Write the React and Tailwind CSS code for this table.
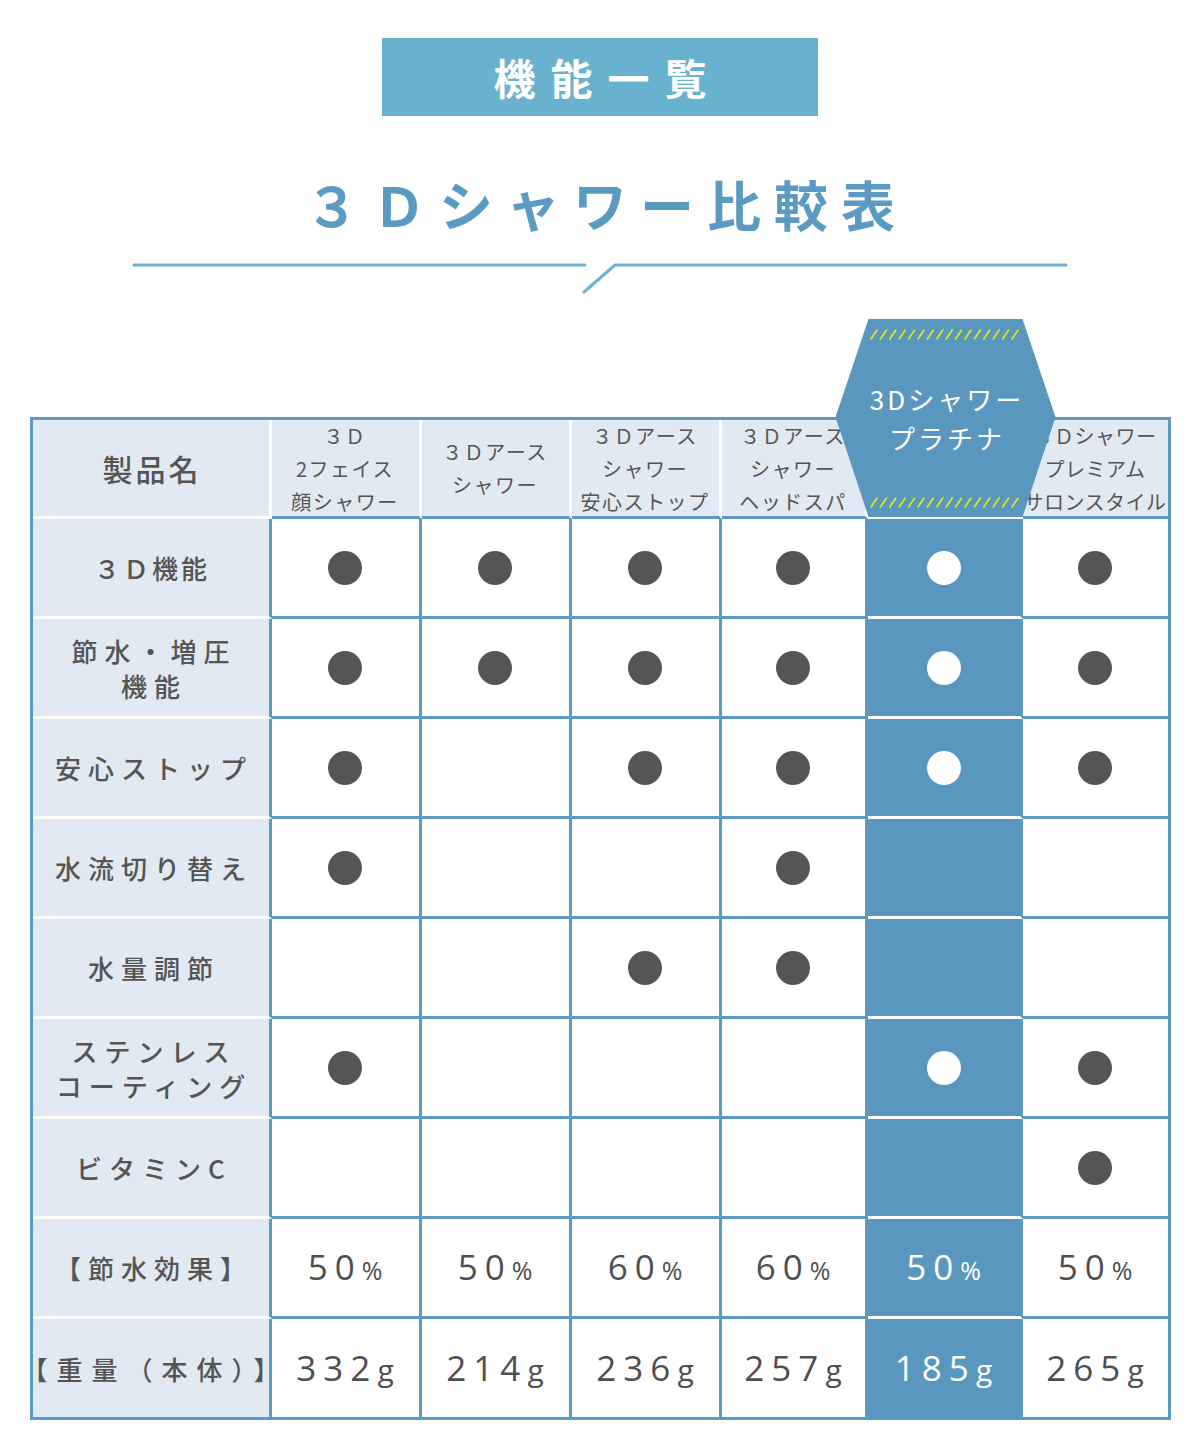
import React from "react";

const headers = [
  ["３Ｄ", "2フェイス", "顔シャワー"],
  ["３Ｄアース", "シャワー"],
  ["３Ｄアース", "シャワー", "安心ストップ"],
  ["３Ｄアース", "シャワー", "ヘッドスパ"],
  null, // platinum (covered by hexagon)
  ["３Ｄシャワー", "プレミアム", "サロンスタイル"],
];

// 1 = dot, 0 = empty
const featureRows = [
  { label: ["３Ｄ機能"], vals: [1, 1, 1, 1, 1, 1], tight: true },
  { label: ["節水・増圧", "機能"], vals: [1, 1, 1, 1, 1, 1] },
  { label: ["安心ストップ"], vals: [1, 0, 1, 1, 1, 1] },
  { label: ["水流切り替え"], vals: [1, 0, 0, 1, 0, 0] },
  { label: ["水量調節"], vals: [0, 0, 1, 1, 0, 0] },
  { label: ["ステンレス", "コーティング"], vals: [1, 0, 0, 0, 1, 1] },
  { label: ["ビタミンC"], vals: [0, 0, 0, 0, 0, 1] },
];

const saving = ["50", "50", "60", "60", "50", "50"];
const weight = ["332", "214", "236", "257", "185", "265"];

const PLAT = 4;

const Stripes = ({ y }) => (
  <g stroke="#e9e61c" strokeWidth="1.6" strokeLinecap="round">
    {Array.from({ length: 16 }).map((_, i) => {
      const x = 35 + i * 9.4;
      return <line key={i} x1={x} y1={y + 9} x2={x + 6} y2={y} />;
    })}
  </g>
);

const Hexagon = () => (
  <div className="absolute top-0 left-[806px] w-[220px] h-[198px] bg-[#5a97be] [clip-path:polygon(33px_0,187px_0,220px_98px,187px_198px,33px_198px,0_98px)] flex flex-col items-center justify-center text-white text-[26px] leading-[39px] tracking-[3px]">
    <svg className="absolute inset-0" width="220" height="198" viewBox="0 0 220 198">
      <Stripes y={11} />
      <Stripes y={179} />
    </svg>
    <p className="relative pl-[3px]">3Dシャワー</p>
    <p className="relative pl-[3px]">プラチナ</p>
  </div>
);

const cellClass = (col, last) => {
  const isLastCol = col === 5;
  if (col === PLAT) {
    return last
      ? "bg-[#5a97be] border-r-[3px] border-r-[#5b9bc1] h-[98px]"
      : "bg-[#5a97be] border-r-[3px] border-r-[#5b9bc1] border-b-[3px] border-b-white h-[100px]";
  }
  if (isLastCol) {
    return last
      ? "bg-white h-[98px]"
      : "bg-white border-b-[3px] border-b-[#5b9bc1] h-[100px]";
  }
  return last
    ? "bg-white border-r-[3px] border-r-[#5b9bc1] h-[98px]"
    : "bg-white border-r-[3px] border-r-[#5b9bc1] border-b-[3px] border-b-[#5b9bc1] h-[100px]";
};

const Label = ({ lines, last, tight, wide }) => (
  <div
    className={
      "flex flex-col items-center justify-center bg-[#e1e9f2] border-r-[3px] border-r-[#5b9bc1] text-[#555] font-medium text-[26px] leading-[35px] whitespace-nowrap " +
      (last ? "h-[98px] " : "h-[100px] border-b-[3px] border-b-white ") +
      (tight ? "tracking-[3px] pl-[3px]" : wide ? "tracking-[9px] pl-[9px]" : "tracking-[7px] pl-[7px]")
    }
  >
    {lines.map((l) => (
      <p key={l}>{l}</p>
    ))}
  </div>
);

const Num = ({ value, unit, plat }) => (
  <p
    className={
      "font-['Open_Sans','Noto_Sans_CJK_JP',sans-serif] " +
      (plat ? "text-white" : "text-[#4f4f4f]")
    }
  >
    <span className="text-[35px] tracking-[7px]">{value}</span>
    <span className={unit === "%" ? "text-[25px]" : "text-[30px]"}>{unit}</span>
  </p>
);

export default function App() {
  return (
    <div className="w-[1200px] min-h-[1450px] bg-white flex flex-col items-center font-['Noto_Sans_CJK_JP',sans-serif]">
      {/* Badge */}
      <div className="mt-[38px] w-[436px] h-[78px] bg-[#69b2cf] flex items-center justify-center">
        <span className="text-white font-bold text-[42px] tracking-[15px] pl-[15px] leading-none">
          機能一覧
        </span>
      </div>

      {/* Title */}
      <h1 className="mt-[58px] h-[60px] leading-[60px] text-[54px] font-bold tracking-[13px] pl-[13px] text-[#5b9bc1]">
        ３Ｄシャワー比較表
      </h1>

      {/* Divider */}
      <svg className="mt-[28px] block" width="936" height="32" viewBox="0 0 936 32">
        <g stroke="#6ab2cf" strokeWidth="3" strokeLinecap="round" fill="none">
          <line x1="2" y1="3" x2="453" y2="3" />
          <polyline points="934,3 483,3 452,30" strokeLinejoin="round" />
        </g>
      </svg>

      {/* Table */}
      <div className="relative mt-[25px] w-[1141px] pt-[98px]">
        <div className="border-[3px] border-[#5b9bc1] grid grid-cols-[239px_150px_150px_150px_146px_155px_145px]">
          {/* header row */}
          <div className="h-[99px] flex items-center justify-center bg-[#e1e9f2] border-r-[3px] border-b-[3px] border-white text-[#555] font-medium text-[30px] tracking-[3px] pl-[3px]">
            製品名
          </div>
          {headers.map((h, i) =>
            i === PLAT ? (
              <div key={i} className="h-[99px] bg-[#5a97be] border-b-[3px] border-b-white" />
            ) : (
              <div
                key={i}
                className={
                  "h-[99px] flex flex-col items-center justify-center bg-[#e1e9f2] border-b-[3px] border-b-[#5b9bc1] text-[#555] text-[20px] leading-[33px] whitespace-nowrap " +
                  (i === 5 ? "tracking-[0.5px]" : "border-r-[3px] border-r-white tracking-[1.5px]")
                }
              >
                {h.map((l) => (
                  <p key={l}>{l}</p>
                ))}
              </div>
            )
          )}

          {/* feature rows */}
          {featureRows.map((row) => (
            <React.Fragment key={row.label.join("")}>
              <Label lines={row.label} tight={row.tight} />
              {row.vals.map((v, c) => (
                <div key={c} className={"flex items-center justify-center " + cellClass(c, false)}>
                  {v === 1 && (
                    <span
                      className={
                        "w-[34px] h-[34px] rounded-full " +
                        (c === PLAT ? "bg-white" : "bg-[#555]")
                      }
                    />
                  )}
                </div>
              ))}
            </React.Fragment>
          ))}

          {/* saving */}
          <Label lines={["【節水効果】"]} />
          {saving.map((v, c) => (
            <div key={c} className={"flex items-center justify-center " + cellClass(c, false)}>
              <Num value={v} unit="%" plat={c === PLAT} />
            </div>
          ))}

          {/* weight */}
          <Label lines={["【重量（本体）】"]} last wide />
          {weight.map((v, c) => (
            <div key={c} className={"flex items-center justify-center " + cellClass(c, true)}>
              <Num value={v} unit="g" plat={c === PLAT} />
            </div>
          ))}
        </div>

        <Hexagon />
      </div>
    </div>
  );
}
